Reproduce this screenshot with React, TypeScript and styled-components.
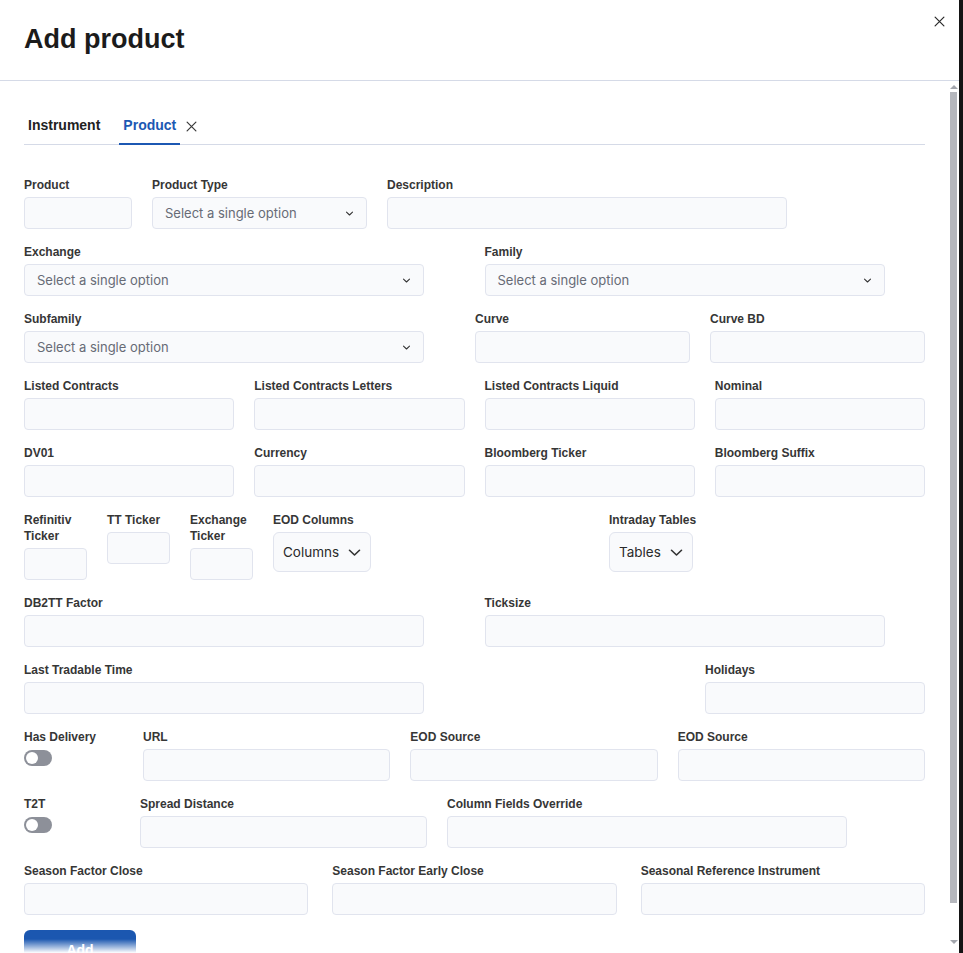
import * as React from 'react';
import styled, { createGlobalStyle } from 'styled-components';

const GlobalStyle = createGlobalStyle`
  html, body {
    margin: 0;
    padding: 0;
    background: #141414;
    font-family: 'Liberation Sans', Arial, sans-serif;
    overflow: hidden;
  }
  * { box-sizing: border-box; }
`;

const Modal = styled.div`
  position: relative;
  width: 959px;
  height: 953px;
  background: #fff;
  display: flex;
  flex-direction: column;
`;

const Header = styled.header`
  position: relative;
  height: 81px;
  flex: none;
  padding: 0 24px;
  display: flex;
  align-items: center;
  border-bottom: 1px solid #d5dae7;
`;

const Title = styled.h1`
  margin: 0 0 2px;
  font-size: 27px;
  font-weight: 700;
  color: #1b1b1b;
`;

const CloseButton = styled.button`
  position: absolute;
  top: 14px;
  right: 13px;
  width: 14px;
  height: 14px;
  padding: 0;
  border: 0;
  background: none;
  display: flex;
  align-items: center;
  justify-content: center;
  cursor: pointer;
`;

const Body = styled.div`
  flex: 1;
  overflow-y: scroll;
  scrollbar-width: none;
  padding: 27px 34px 30px 24px;

  &::-webkit-scrollbar {
    display: none;
  }
`;

/* drawn scrollbar, lies over the right edge of the body */
const ScrollTrack = styled.div`
  position: absolute;
  top: 81px;
  right: 0;
  bottom: 0;
  width: 11px;
  background: #fff;
  display: flex;
  flex-direction: column;
  align-items: center;
  padding: 4px 0 5px;
`;

const Arrow = styled.div<{ $down?: boolean }>`
  width: 0;
  height: 0;
  border-left: 4px solid transparent;
  border-right: 4px solid transparent;
  ${p =>
    p.$down
      ? 'border-top: 4px solid #a3a6ad; margin-top: 37px;'
      : 'border-bottom: 4px solid #a3a6ad; margin-bottom: 3px;'}
`;

const Thumb = styled.div`
  width: 7px;
  height: 811px;
  background: #b5b7bd;
`;

const Fade = styled.div`
  position: absolute;
  left: 0;
  right: 11px;
  bottom: 0;
  height: 14px;
  background: linear-gradient(rgba(255, 255, 255, 0), #fff);
  pointer-events: none;
`;

const Tabs = styled.div`
  display: flex;
  align-items: center;
  gap: 15px;
  border-bottom: 1px solid #d5dae7;
`;

const Tab = styled.button<{ $active?: boolean }>`
  padding: 8px 4px 9px;
  margin-bottom: -1px;
  border: 0;
  border-bottom: 2px solid ${p => (p.$active ? '#1c58b3' : 'transparent')};
  background: none;
  font-family: inherit;
  font-size: 14px;
  line-height: 18px;
  font-weight: 700;
  color: ${p => (p.$active ? '#1c58b3' : '#222')};
  cursor: pointer;
`;

const TabGroup = styled.div`
  display: flex;
  align-items: center;
  gap: 6px;
`;

const Form = styled.form`
  margin-top: 32px;
  display: flex;
  flex-direction: column;
  gap: 15px;
`;

const Row = styled.div`
  display: flex;
  align-items: flex-start;
  gap: 20px;
`;

const GridRow = styled.div<{ $cols: number; $gap?: number }>`
  display: grid;
  grid-template-columns: repeat(${p => p.$cols}, 1fr);
  column-gap: ${p => p.$gap ?? 20}px;
  align-items: start;
`;

const Field = styled.div<{ $width?: number; $push?: boolean; $grow?: boolean }>`
  display: flex;
  flex-direction: column;
  align-items: flex-start;
  width: ${p => (p.$width ? `${p.$width}px` : 'auto')};
  max-width: 100%;
  flex: ${p => (p.$grow ? '1 1 0' : 'none')};
  margin-left: ${p => (p.$push ? 'auto' : '0')};
  min-width: 0;
`;

const Label = styled.label`
  font-size: 12px;
  line-height: 16px;
  font-weight: 700;
  color: #363636;
  margin-bottom: 4px;
`;

const Input = styled.input`
  width: 100%;
  height: 32px;
  border: 1px solid #e1e4ee;
  border-radius: 4px;
  background: #f9fafc;
  padding: 0 12px;
  font-family: Inter, 'Noto Sans', sans-serif;
  font-size: 13px;
  outline: none;
`;

const Select = styled.div`
  width: 100%;
  height: 32px;
  border: 1px solid #e1e4ee;
  border-radius: 4px;
  background: #f9fafc;
  padding: 0 12px;
  display: flex;
  align-items: center;
  justify-content: space-between;
  font-family: Inter, 'Noto Sans', sans-serif;
  font-size: 13px;
  color: #676b76;
`;

const MultiButton = styled.button`
  height: 40px;
  padding: 0 8px 0 9px;
  border: 1px solid #e1e4ee;
  border-radius: 6px;
  background: #f9fafc;
  display: flex;
  align-items: center;
  gap: 8px;
  font-family: Inter, 'Noto Sans', sans-serif;
  font-size: 13.5px;
  color: #2a2a2a;
  cursor: pointer;
`;

const Toggle = styled.div<{ $on?: boolean }>`
  position: relative;
  width: 28px;
  height: 16px;
  margin-top: 1px;
  border-radius: 8px;
  background: ${p => (p.$on ? '#1c58b3' : '#8d9099')};

  &::after {
    content: '';
    position: absolute;
    top: 2px;
    left: ${p => (p.$on ? '14px' : '2px')};
    width: 12px;
    height: 12px;
    border-radius: 50%;
    background: #fff;
  }
`;

const AddButton = styled.button`
  margin-top: 0;
  width: 112px;
  height: 40px;
  border: 0;
  border-radius: 6px;
  background: #1b57b0;
  color: #fff;
  font-family: inherit;
  font-size: 14px;
  font-weight: 700;
  cursor: pointer;
`;

const Cross = ({ size = 10, color = '#333' }: { size?: number; color?: string }) => (
  <svg width={size} height={size} viewBox="0 0 10 10" fill="none">
    <path d="M1 1L9 9M9 1L1 9" stroke={color} strokeWidth="1.1" strokeLinecap="round" />
  </svg>
);

const Chevron = ({ size = 9, stroke = 1.4 }: { size?: number; stroke?: number }) => (
  <svg width={size} height={size} viewBox="0 0 12 12" fill="none">
    <path d="M2 4.2L6 8L10 4.2" stroke="#333" strokeWidth={stroke} strokeLinecap="round" strokeLinejoin="round" />
  </svg>
);

const TextField = ({ label, ...rest }: { label: string; $width?: number; $push?: boolean; $grow?: boolean }) => (
  <Field {...rest}>
    <Label>{label}</Label>
    <Input />
  </Field>
);

const SelectField = ({ label, ...rest }: { label: string; $width?: number; $push?: boolean }) => (
  <Field {...rest}>
    <Label>{label}</Label>
    <Select>
      <span>Select a single option</span>
      <Chevron />
    </Select>
  </Field>
);

const MultiField = ({ label, text, $width }: { label: string; text: string; $width?: number }) => (
  <Field $width={$width}>
    <Label>{label}</Label>
    <MultiButton type="button">
      {text}
      <Chevron size={15} stroke={1.3} />
    </MultiButton>
  </Field>
);

const ToggleField = ({ label, $width }: { label: string; $width: number }) => (
  <Field $width={$width}>
    <Label>{label}</Label>
    <Toggle />
  </Field>
);

export default function App() {
  return (
    <>
      <GlobalStyle />
      <Modal>
        <Header>
          <Title>Add product</Title>
          <CloseButton aria-label="Close">
            <Cross size={11} color="#2b2b2b" />
          </CloseButton>
        </Header>
        <Body>
          <Tabs>
            <Tab type="button">Instrument</Tab>
            <TabGroup>
              <Tab type="button" $active>
                Product
              </Tab>
              <Cross size={11} color="#3a3a3a" />
            </TabGroup>
          </Tabs>

          <Form onSubmit={e => e.preventDefault()}>
            <Row>
              <TextField label="Product" $width={108} />
              <SelectField label="Product Type" $width={215} />
              <TextField label="Description" $width={400} />
            </Row>

            <GridRow $cols={2}>
              <SelectField label="Exchange" $width={400} />
              <SelectField label="Family" $width={400} />
            </GridRow>

            <Row>
              <SelectField label="Subfamily" $width={400} />
              <TextField label="Curve" $width={215} $push />
              <TextField label="Curve BD" $width={215} />
            </Row>

            <GridRow $cols={4}>
              <TextField label="Listed Contracts" />
              <TextField label="Listed Contracts Letters" />
              <TextField label="Listed Contracts Liquid" />
              <TextField label="Nominal" />
            </GridRow>

            <GridRow $cols={4}>
              <TextField label="DV01" />
              <TextField label="Currency" />
              <TextField label="Bloomberg Ticker" />
              <TextField label="Bloomberg Suffix" />
            </GridRow>

            <Row>
              <TextField label="Refinitiv Ticker" $width={63} />
              <TextField label="TT Ticker" $width={63} />
              <TextField label="Exchange Ticker" $width={63} />
              <MultiField label="EOD Columns" text="Columns" $width={316} />
              <MultiField label="Intraday Tables" text="Tables" />
            </Row>

            <GridRow $cols={2}>
              <TextField label="DB2TT Factor" $width={400} />
              <TextField label="Ticksize" $width={400} />
            </GridRow>

            <Row>
              <TextField label="Last Tradable Time" $width={400} />
              <TextField label="Holidays" $width={220} $push />
            </Row>

            <Row>
              <ToggleField label="Has Delivery" $width={99} />
              <TextField label="URL" $grow />
              <TextField label="EOD Source" $grow />
              <TextField label="EOD Source" $grow />
            </Row>

            <Row>
              <ToggleField label="T2T" $width={96} />
              <TextField label="Spread Distance" $width={287} />
              <TextField label="Column Fields Override" $width={400} />
            </Row>

            <GridRow $cols={3} $gap={24}>
              <TextField label="Season Factor Close" />
              <TextField label="Season Factor Early Close" />
              <TextField label="Seasonal Reference Instrument" />
            </GridRow>

            <div>
              <AddButton type="submit">Add</AddButton>
            </div>
          </Form>
        </Body>
        <ScrollTrack>
          <Arrow />
          <Thumb />
          <Arrow $down />
        </ScrollTrack>
        <Fade />
      </Modal>
    </>
  );
}
